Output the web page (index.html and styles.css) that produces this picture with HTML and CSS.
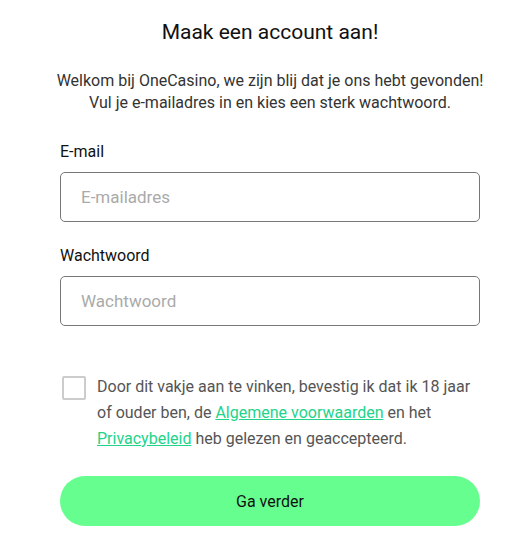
FILE: index.html
```html
<!DOCTYPE html>
<html lang="nl">
<head>
    <meta charset="UTF-8">
    <title>Maak een account aan</title>
    <link rel="stylesheet" href="styles.css">
</head>
<body>

<div class="signup">
    <h1 class="title">Maak een account aan!</h1>
    <p class="intro">Welkom bij OneCasino, we zijn blij dat je ons hebt gevonden!<br>Vul je e-mailadres in en kies een sterk wachtwoord.</p>

    <form class="form">
        <label class="field">
            <span class="label">E-mail</span>
            <input class="input" type="email" placeholder="E-mailadres">
        </label>
        <label class="field">
            <span class="label">Wachtwoord</span>
            <input class="input" type="password" placeholder="Wachtwoord">
        </label>

        <label class="terms">
            <span class="box"></span>
            <span class="terms-text">Door dit vakje aan te vinken, bevestig ik dat ik 18 jaar of ouder ben, de <a href="#">Algemene voorwaarden</a> en het <a href="#">Privacybeleid</a> heb gelezen en geaccepteerd.</span>
        </label>

        <button class="submit" type="button">Ga verder</button>
    </form>
</div>

</body>
</html>
```

FILE: styles.css
```css
html, body {
    margin: 0;
    padding: 0;
    background: #fff;
}

body {
    font-family: Roboto, "Liberation Sans", sans-serif;
    color: #1a1a1a;
}

.signup {
    width: 420px;
    margin-left: 60px;
    padding-top: 18px;
}

.title {
    margin: 0;
    font-size: 21px;
    font-weight: 400;
    line-height: 28px;
    text-align: center;
    color: #111;
}

.intro {
    margin: 24px -20px 0;
    font-size: 16px;
    line-height: 22px;
    text-align: center;
    color: #333;
}

.form {
    display: flex;
    flex-direction: column;
    margin-top: 28px;
}

.field {
    display: flex;
    flex-direction: column;
    margin-bottom: 24px;
}

.label {
    font-size: 16px;
    line-height: 20px;
    color: #111;
    margin-bottom: 10px;
}

.input {
    box-sizing: border-box;
    height: 50px;
    padding: 0 20px;
    border: 1px solid #777;
    border-radius: 5px;
    font-family: inherit;
    font-size: 17px;
    color: #111;
    outline: none;
}

.input::placeholder {
    color: #aaa;
}

.terms {
    display: flex;
    gap: 11px;
    margin-top: 25px;
    cursor: pointer;
}

.box {
    flex: none;
    box-sizing: border-box;
    width: 24px;
    height: 24px;
    margin-top: 1px;
    margin-left: 2px;
    border: 2px solid #ccc;
    border-radius: 2px;
}

.terms-text {
    font-size: 16px;
    line-height: 26px;
    color: #555;
    margin-top: -1px;
}

.terms-text a {
    color: #22d48a;
}

.submit {
    height: 50px;
    margin-top: 24px;
    border: 0;
    border-radius: 25px;
    background: #66ff8f;
    font-family: inherit;
    font-size: 16px;
    color: #111;
    cursor: pointer;
}
```
